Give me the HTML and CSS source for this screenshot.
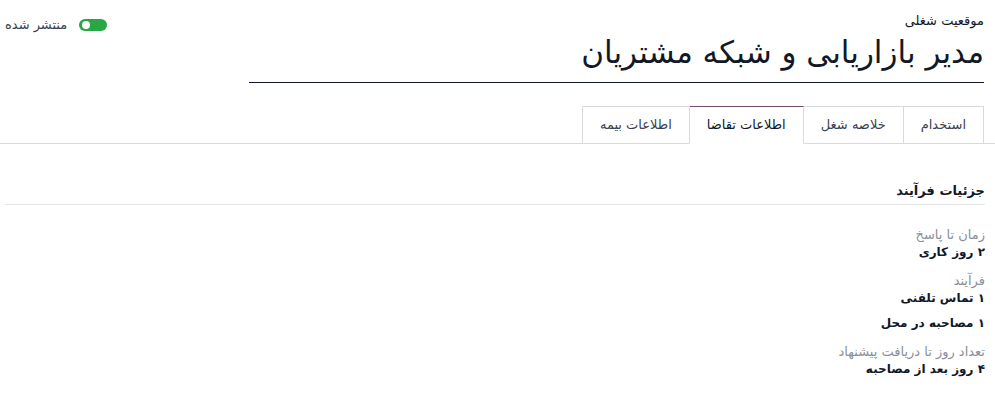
FILE: index.html
```html
<!DOCTYPE html>
<html lang="fa" dir="rtl">
<head>
  <meta charset="UTF-8" />
  <meta name="viewport" content="width=device-width, initial-scale=1.0"/>
  <title>موقعیت شغلی</title>
  <link rel="stylesheet" href="styles.css">
</head>
<body>

<div class="header">
  <div class="title-block">
    <label class="title-label">موقعیت شغلی</label>
    <h1 class="title">مدیر بازاریابی و شبکه مشتریان</h1>
  </div>
  <div class="status">
    <span class="switch"><span class="knob"></span></span>
    <span class="status-text">منتشر شده</span>
  </div>
</div>

<ul class="tabs">
  <li class="tab">استخدام</li>
  <li class="tab">خلاصه شغل</li>
  <li class="tab active">اطلاعات تقاضا</li>
  <li class="tab">اطلاعات بیمه</li>
</ul>

<div class="content">
  <h3 class="section-title">جزئیات فرآیند</h3>

  <div class="field">
    <div class="field-label">زمان تا پاسخ</div>
    <div class="field-value">۲ روز کاری</div>
  </div>

  <div class="field">
    <div class="field-label">فرآیند</div>
    <div class="field-value">۱ تماس تلفنی</div>
    <div class="field-value second">۱ مصاحبه در محل</div>
  </div>

  <div class="field">
    <div class="field-label">تعداد روز تا دریافت پیشنهاد</div>
    <div class="field-value">۴ روز بعد از مصاحبه</div>
  </div>
</div>

</body>
</html>
```

FILE: styles.css
```css
body {
  margin: 0;
  padding: 0;
  font-family: 'DejaVu Sans', 'Noto Sans', sans-serif;
  font-size: 13px;
  color: #111827;
  background: #fff;
  direction: rtl;
}

.header {
  display: flex;
  justify-content: space-between;
  align-items: flex-start;
  padding: 12px 11px 0 5px;
}

.title-block {
  width: 735px;
}

.title-label {
  display: block;
  font-size: 13px;
  line-height: 18px;
}

.title {
  margin: 0;
  font-weight: normal;
  font-size: 31px;
  line-height: 44px;
  padding-bottom: 8px;
  border-bottom: 1px solid #111827;
}

.status {
  display: flex;
  align-items: center;
  gap: 12px;
  padding-top: 5px;
}

.status-text {
  font-size: 13px;
  color: #374151;
}

.switch {
  width: 28px;
  height: 12px;
  border-radius: 6px;
  background: #28a745;
  position: relative;
}

.knob {
  position: absolute;
  top: 2px;
  left: 3px;
  width: 8px;
  height: 8px;
  border-radius: 50%;
  background: #fff;
}

.tabs {
  list-style: none;
  display: flex;
  margin: 23px 0 0;
  padding: 0 11px 0 0;
  border-bottom: 1px solid #d8dadd;
}

.tab {
  padding: 0 17px;
  height: 36px;
  line-height: 36px;
  border: 1px solid #d8dadd;
  border-bottom: none;
  margin-bottom: -1px;
  margin-left: -1px;
  color: #374151;
  font-size: 13px;
  background: #fff;
}

.tab.active {
  border-top-color: #714b67;
  border-bottom: 1px solid #fff;
  color: #111827;
}

.content {
  padding: 38px 10px 0 10px;
  margin-left: -5px;
}

.section-title {
  margin: 0 0 21px;
  font-size: 13px;
  font-weight: bold;
  line-height: 18px;
  padding-bottom: 4px;
  border-bottom: 1px solid #e3e5e8;
}

.field {
  margin-bottom: 11px;
}

.field-label {
  color: #8a8f98;
  font-size: 13px;
  line-height: 17px;
}

.field-value {
  font-weight: bold;
  font-size: 12px;
  line-height: 18px;
}

.field-value.second {
  margin-top: 7px;
}
```
